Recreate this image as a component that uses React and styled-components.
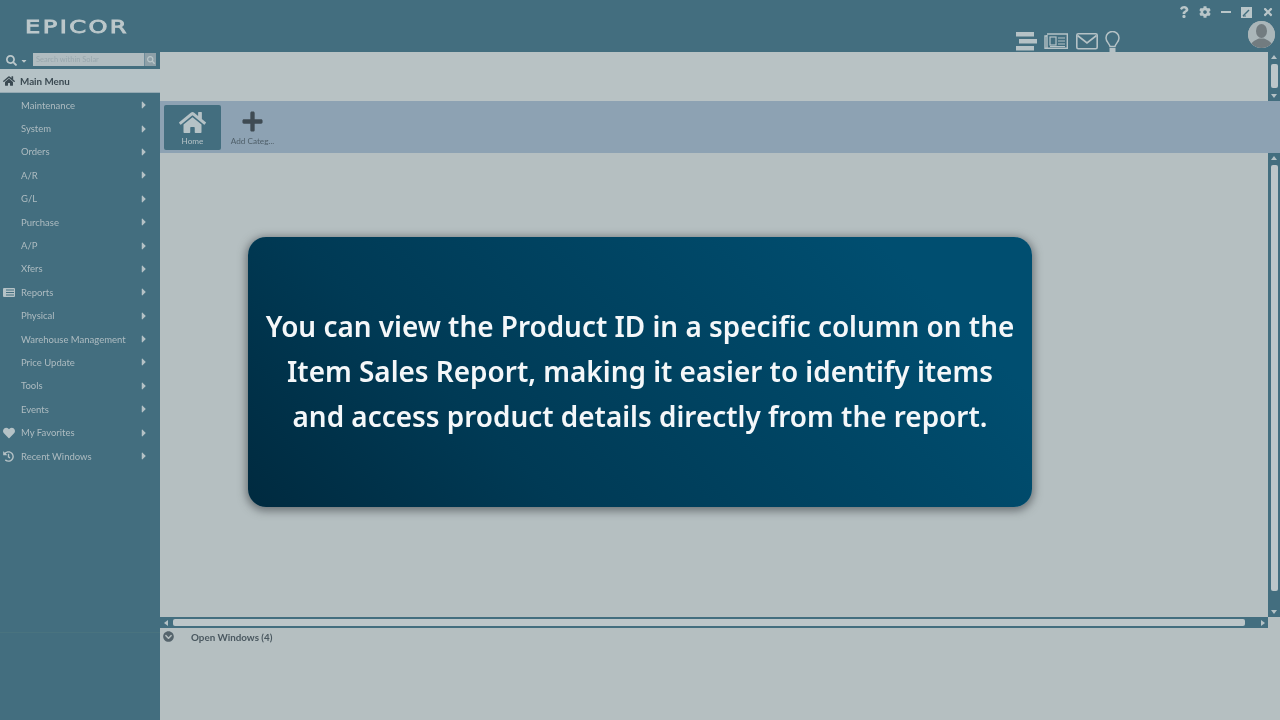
import React from "react";
import styled, { createGlobalStyle } from "styled-components";
import { FaHome, FaPlus, FaSearch, FaHeart, FaHistory, FaCog, FaQuestion, FaTimes, FaCaretRight, FaCaretDown, FaChevronCircleDown } from "react-icons/fa";

const Global = createGlobalStyle`
  html, body { margin: 0; padding: 0; background: #b5bfc1; }
  * { box-sizing: border-box; }
  body { font-family: "Lato", "Open Sans", "Liberation Sans", sans-serif; overflow: hidden; }
`;

const Page = styled.div`
  position: relative; width: 1280px; height: 720px; display: grid;
  grid-template-columns: 160px 1fr; grid-template-rows: 52px 1fr; background: #b5bfc1; overflow: hidden; filter: blur(0.35px);
`;
const Header = styled.header`
  grid-column: 1 / 3; background: #436e7f; display: flex; justify-content: space-between; padding: 0 0 0 25px; align-items: flex-start;
`;
const Logo = styled.div`
  margin-top: 17px; font-family: "DejaVu Sans", sans-serif; font-size: 17px; line-height: 21px; letter-spacing: 1.7px; color: #bcc8cb;
  -webkit-text-stroke: 0.8px #bcc8cb; transform: scaleX(1.42); transform-origin: left center;
`;
const HeaderRight = styled.div`
  display: flex; flex-direction: column; align-items: flex-end; width: 270px; height: 52px; position: relative;
`;
const WindowControls = styled.div`
  display: flex; align-items: center; height: 12px; margin-top: 6px; padding-right: 2px; color: #b9c6c9;
`;
const WindowControl = styled.span`
  width: 21px; display: flex; align-items: center; justify-content: center;
`;
const HeaderTools = styled.div`
  display: flex; align-items: center; height: 21px; margin-top: 13px; padding-right: 160px; gap: 7px;
`;
const Avatar = styled.div`
  position: absolute; right: 5px; top: 21px; width: 27px; height: 27px; border-radius: 50%; overflow: hidden; background: #a9b5b8;
`;
const Sidebar = styled.aside`
  background: #436e7f; display: flex; flex-direction: column; position: relative;
`;
const SearchBar = styled.div`
  height: 17px; display: flex; align-items: center; padding-left: 6px; color: #bcc8cb;
`;
const SearchInput = styled.div`
  width: 123px; height: 13px; margin: -2px 0 0 5px; background: #b0bcc0; color: #98a7ad; font-size: 7.5px; line-height: 13px; padding-left: 3px; display: flex; justify-content: space-between;
`;
const SearchBtn = styled.span`
  width: 12px; height: 13px; background: #8ea0a8; border-left: 1px solid #6f8d9b; display: flex; align-items: center; justify-content: center; color: #b9c6c9;
`;
const MainMenu = styled.div`
  height: 24px; background: #b5c2c6; display: flex; align-items: center; padding-left: 3px; gap: 5px; color: #3b4a52; font-size: 9.8px; font-weight: 700; border-bottom: 1px solid #94a9b2;
`;
const MenuList = styled.nav`
  display: flex; flex-direction: column; padding-top: 0.5px;
`;
const MenuItem = styled.div`
  height: 23.4px; display: flex; align-items: center; padding: 0 10px 0 21px; justify-content: space-between; color: #aebcc1; font-size: 9.5px; position: relative;
`;
const MenuIcon = styled.span`
  position: absolute; left: 3px; top: 0; bottom: 0; display: flex; align-items: center; color: #b5c2c6;
`;
const SideFoot = styled.div`
  position: absolute; left: 0; right: 0; bottom: 0; height: 88px; border-top: 1px solid #49737f;
`;
const Main = styled.main`
  display: flex; flex-direction: column; min-width: 0;
`;
const TopPanel = styled.div`
  height: 49px; display: flex; justify-content: flex-end; background: #b8c2c4;
`;
const VScroll = styled.div`
  width: 12px; background: #436e7f; display: flex; flex-direction: column; align-items: center; padding: 3px 0; font-size: 0;
`;
const VThumb = styled.div`
  width: 7px; flex: 1; margin: ${p => p.$margin}; background: #bcc6c9; border-radius: 2px;
`;
const Arrow = styled.span`
  width: 0; height: 0; border-left: 3px solid transparent; border-right: 3px solid transparent;
  ${p => p.$down ? "border-top: 4px solid #b5c2c6;" : "border-bottom: 4px solid #b5c2c6;"}
`;
const Toolbar = styled.div`
  height: 52px; background: #8da2b3; display: flex; padding: 4px 0 3px 4px; gap: 3px;
`;
const ToolBtn = styled.div`
  width: ${p => p.$w}px; border-radius: 2px; background: ${p => p.$active ? "#436e7f" : "transparent"}; color: ${p => p.$active ? "#b5c2c6" : "#3f4b53"};
  display: flex; flex-direction: column; align-items: center; font-size: 8.2px; padding-top: 4px;
`;
const ToolLabel = styled.span`
  margin-top: -1px; line-height: 12px; color: ${p => p.$active ? "#b5c2c6" : "#4f5f69"};
`;
const Content = styled.div`
  height: 464px; display: flex; justify-content: flex-end; background: #b5bfc1;
`;
const HScroll = styled.div`
  height: 11px; background: #436e7f; display: flex; align-items: center; padding: 0 3px 0 4px; margin-right: 12px;
`;
const HThumb = styled.div`
  flex: 1; height: 7px; margin: 0 16px 0 5px; background: #bcc6c9; border-radius: 2px;
`;
const HArrow = styled.span`
  width: 0; height: 0; border-top: 3px solid transparent; border-bottom: 3px solid transparent;
  ${p => p.$right ? "border-left: 4px solid #b5c2c6;" : "border-right: 4px solid #b5c2c6;"}
`;
const OpenWindows = styled.div`
  flex: 1; background: #b5bfc1; display: flex; align-items: flex-start; padding: 3px 0 0 3px; color: #4a5860; font-size: 9.8px; font-weight: 700;
`;
const OpenLabel = styled.span`
  margin-left: 17px; line-height: 13px;
`;
const Card = styled.div`
  position: absolute; left: 248px; top: 237px; width: 784px; height: 270px; border-radius: 18px;
  background: linear-gradient(45deg, #002a3f 0%, #003a55 30%, #004e70 85%, #004e70 100%);
  box-shadow: 0 2px 9px 2px rgba(60, 65, 70, .6);
  display: flex; align-items: center; justify-content: center; text-align: center; white-space: nowrap; padding-bottom: 2px;
  color: #f4f7f9; font-family: "Noto Sans", sans-serif; font-weight: 600; font-size: 27.9px; line-height: 45px;
`;

const Stack = () => (
  <svg width="21" height="19" viewBox="0 0 21 19" fill="#b5c2c6"><rect width="18" height="4.5" y="0" x="0" /><rect width="18" height="4.5" y="7" x="3" /><rect width="18" height="4.5" y="14" x="0" /></svg>
);
const News = () => (
  <svg width="25" height="17" viewBox="0 0 25 17" fill="none" stroke="#b5c2c6" strokeWidth="1.4"><path d="M3 2v13.3h20.3V1H3M3 3H1v12.3h2" /><rect x="6" y="4" width="6" height="8" strokeWidth="1.2" /><path d="M14 5h7M14 8h7M14 11h7M6 13.5h15" strokeWidth="1.2" /></svg>
);
const Mail = () => (
  <svg width="22" height="17" viewBox="0 0 22 17" fill="none" stroke="#b5c2c6" strokeWidth="1.6"><rect x="0.8" y="0.8" width="20.4" height="15" rx="1.5" /><path d="M1.5 2.5 11 10l9.5-7.5" /></svg>
);
const Bulb = () => (
  <svg width="15" height="21" viewBox="0 0 15 21" fill="none" stroke="#b5c2c6" strokeWidth="1.5"><path d="M5 15.5C4.5 12.5 1 11 1 7a6.5 6.5 0 0 1 13 0c0 4-3.5 5.5-4 8.5z" /><rect x="4.5" y="17" width="6" height="4" fill="#b5c2c6" stroke="none" /></svg>
);
const Maximize = () => (
  <svg width="11" height="11" viewBox="0 0 11 11"><rect width="11" height="11" fill="#b9c6c9" /><path d="M2 9 8 3" stroke="#436e7f" strokeWidth="1.5" /><path d="M2 9h3" stroke="#436e7f" /></svg>
);
const Minimize = () => (
  <svg width="10" height="3" viewBox="0 0 10 3"><rect width="10" height="2" fill="#b9c6c9" /></svg>
);
const Reports = () => (
  <svg width="12" height="9" viewBox="0 0 12 9"><rect width="12" height="9" rx="1" fill="#b5c2c6" /><path d="M3 2h8M3 4.5h8M3 7h8" stroke="#436e7f" /></svg>
);
const Person = () => (
  <svg width="27" height="27" viewBox="0 0 27 27"><rect width="27" height="27" fill="#aab6b9" /><ellipse cx="13.5" cy="10" rx="5.5" ry="7" fill="#727c80" /><path d="M2 27c0-6 6-8 9-9.5h5c3 1.5 9 3.5 9 9.5z" fill="#727c80" /></svg>
);

const items = ["Maintenance", "System", "Orders", "A/R", "G/L", "Purchase", "A/P", "Xfers", "Reports", "Physical", "Warehouse Management", "Price Update", "Tools", "Events", "My Favorites", "Recent Windows"];
const icons = {
  Reports: <Reports />,
  "My Favorites": <FaHeart size={12} />,
  "Recent Windows": <FaHistory size={11} />,
};

export default function App() {
  return (
    <Page>
      <Global />
      <Header>
        <Logo>EPICOR</Logo>
        <HeaderRight>
          <WindowControls>
            <WindowControl><FaQuestion size={12} /></WindowControl>
            <WindowControl><FaCog size={12} /></WindowControl>
            <WindowControl><Minimize /></WindowControl>
            <WindowControl><Maximize /></WindowControl>
            <WindowControl><FaTimes size={12} /></WindowControl>
          </WindowControls>
          <HeaderTools>
            <Stack />
            <News />
            <Mail />
            <Bulb />
          </HeaderTools>
          <Avatar><Person /></Avatar>
        </HeaderRight>
      </Header>
      <Sidebar>
        <SearchBar>
          <FaSearch size={11} />
          <FaCaretDown size={8} style={{ marginLeft: 3 }} />
          <SearchInput>Search within Solar<SearchBtn><FaSearch size={8} /></SearchBtn></SearchInput>
        </SearchBar>
        <MainMenu><FaHome size={12} />Main Menu</MainMenu>
        <MenuList>
          {items.map(name => (
            <MenuItem key={name}>
              {icons[name] && <MenuIcon>{icons[name]}</MenuIcon>}
              {name}
              <FaCaretRight size={12} color="#b5c2c6" />
            </MenuItem>
          ))}
        </MenuList>
        <SideFoot />
      </Sidebar>
      <Main>
        <TopPanel>
          <VScroll><Arrow /><VThumb $margin="5px 0 6px" /><Arrow $down /></VScroll>
        </TopPanel>
        <Toolbar>
          <ToolBtn $w={57} $active>
            <FaHome size={27} />
            <ToolLabel $active>Home</ToolLabel>
          </ToolBtn>
          <ToolBtn $w={57}>
            <FaPlus size={23} style={{ margin: "1px 0 3px" }} />
            <ToolLabel>Add Categ...</ToolLabel>
          </ToolBtn>
        </Toolbar>
        <Content>
          <VScroll><Arrow /><VThumb $margin="5px 0 19px" /><Arrow $down /></VScroll>
        </Content>
        <HScroll><HArrow /><HThumb /><HArrow $right /></HScroll>
        <OpenWindows>
          <FaChevronCircleDown size={11} color="#55646c" />
          <OpenLabel>Open Windows (4)</OpenLabel>
        </OpenWindows>
      </Main>
      <Card>
        <div>You can view the Product ID in a specific column on the<br />Item Sales Report, making it easier to identify items<br />and access product details directly from the report.</div>
      </Card>
    </Page>
  );
}
